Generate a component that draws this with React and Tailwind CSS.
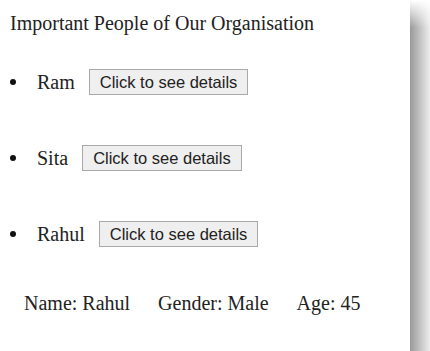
import React from 'react';

const people = ['Ram', 'Sita', 'Rahul'];

const App = () => {
  return (
    <div className="flex h-[351px] w-[430px] bg-white" style={{ fontFamily: '"Liberation Serif", "Times New Roman", serif' }}>
      {/* Page content */}
      <div className="w-[410px] text-[20px] text-[#222]">
        <div className="pl-[10px] pt-[10px] leading-[26px]">Important People of Our Organisation</div>

        <div className="mt-[33px] flex flex-col gap-[50px]">
          {people.map((p) => (
            <div key={p} className="flex h-[26px] items-center">
              <span className="ml-[10px] h-[6px] w-[6px] rounded-full bg-[#111]" />
              <span className="ml-[21px]">{p}</span>
              <button
                className="ml-[14px] h-[26px] border border-[#a9a9a9] bg-[#efefef] px-[10px] text-[16.5px] leading-[24px] text-[#222]"
                style={{ fontFamily: '"Liberation Sans", Arial, sans-serif' }}
              >
                Click to see details
              </button>
            </div>
          ))}
        </div>

        <div className="mt-[43px] flex gap-[28px] pl-[24px] leading-[26px]">
          <span>Name: Rahul</span>
          <span>Gender: Male</span>
          <span>Age: 45</span>
        </div>
      </div>

      {/* Right edge shadow */}
      <div className="flex w-[20px] flex-col bg-gradient-to-r from-[#999] to-[#eee]">
        <div className="h-[28px] bg-gradient-to-b from-white to-transparent" />
      </div>
    </div>
  );
};

export default App;
